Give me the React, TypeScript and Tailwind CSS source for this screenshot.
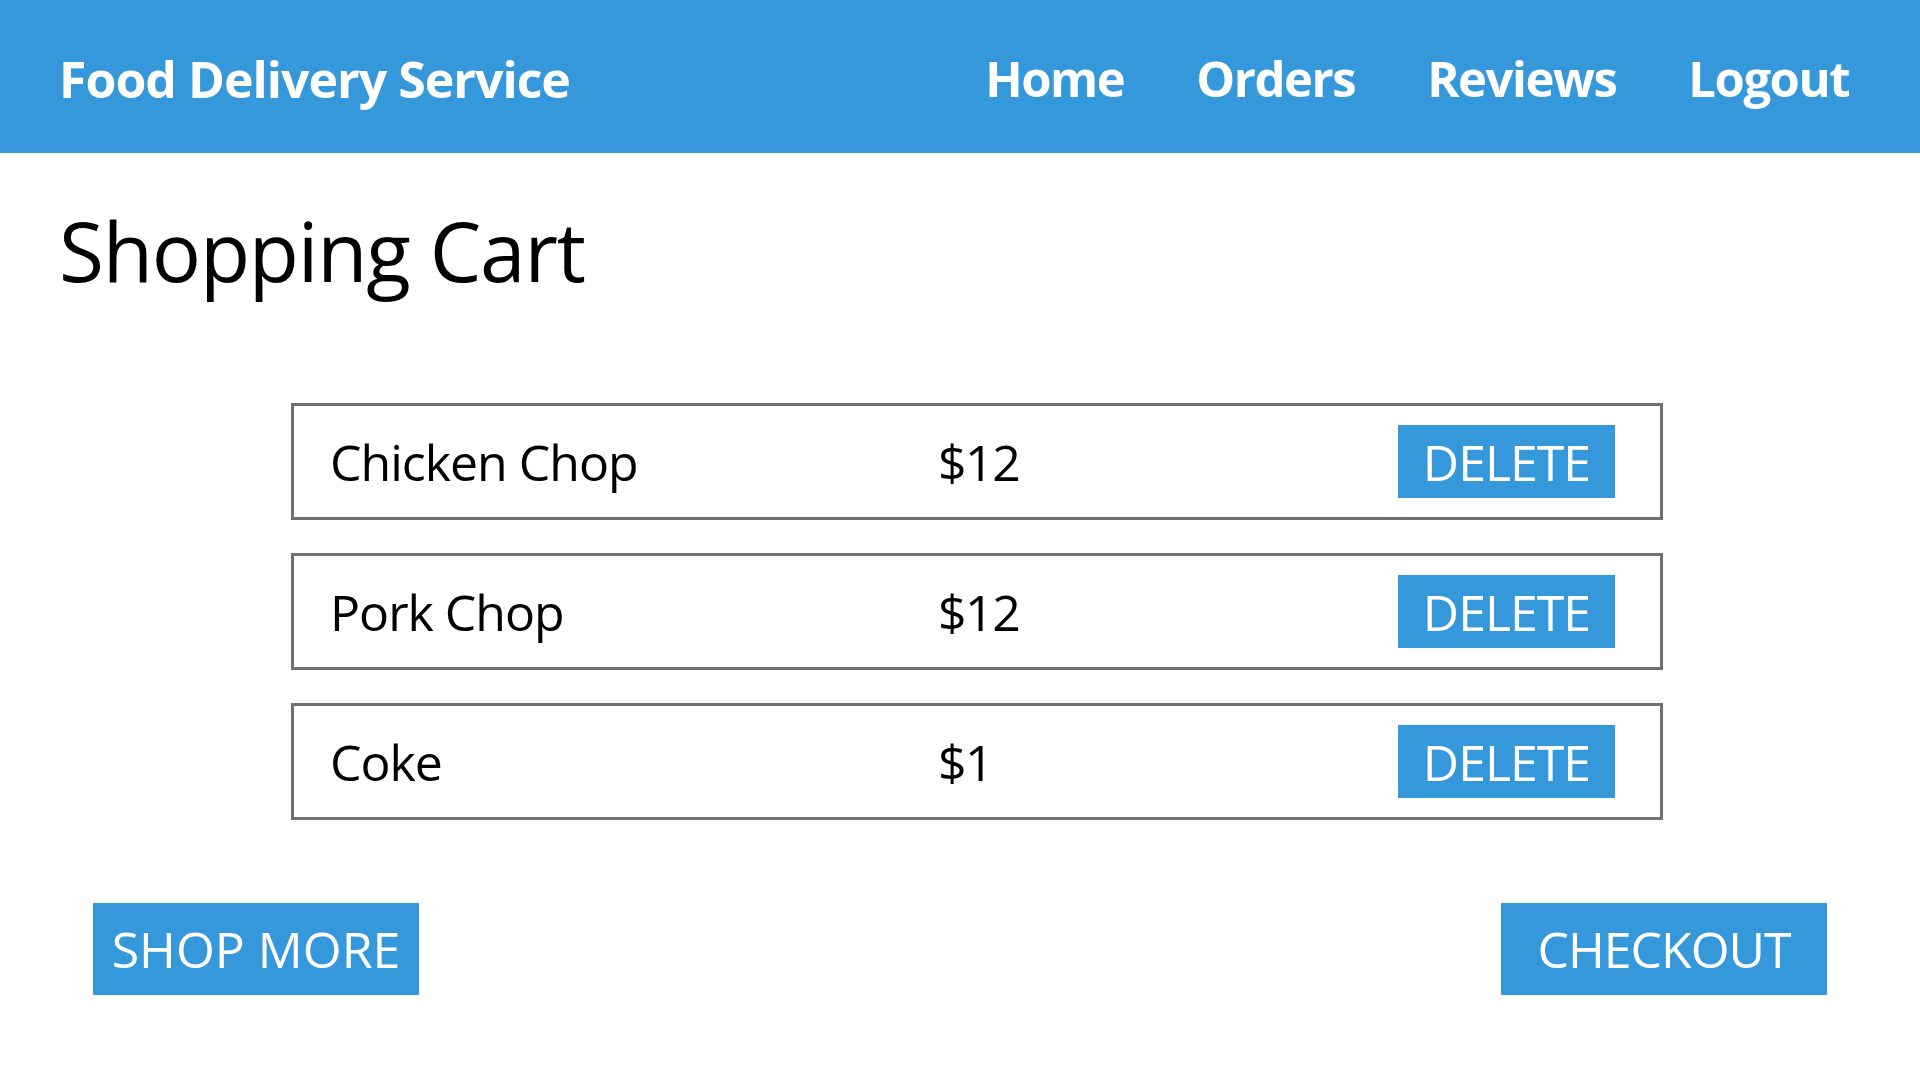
import React from 'react';

type CartItem = { id: number; name: string; price: number };

const items: CartItem[] = [
  { id: 1, name: 'Chicken Chop', price: 12 },
  { id: 2, name: 'Pork Chop', price: 12 },
  { id: 3, name: 'Coke', price: 1 },
];

const navLinks = ['Home', 'Orders', 'Reviews', 'Logout'];

const Header: React.FC = () => (
  <header className="h-[153px] bg-[#3498db] text-white flex items-center justify-between pt-[4px] pl-[59px] pr-[71px]">
    <h1 className="text-[50px] font-bold leading-none tracking-[-0.02em]">Food Delivery Service</h1>
    <nav className="flex items-center gap-[72px]">
      {navLinks.map((link) => (
        <a key={link} href="#" className="text-[49px] font-bold leading-none tracking-[-0.03em]">
          {link}
        </a>
      ))}
    </nav>
  </header>
);

const CartRow: React.FC<{ item: CartItem }> = ({ item }) => (
  <div className="h-[117px] border-[3px] border-[#707070] flex items-center pl-[36px] pr-[45px]">
    <span className="w-[608px] text-[50px] font-medium leading-none tracking-[-0.02em]">{item.name}</span>
    <span className="text-[50px] font-medium leading-none tracking-[-0.03em]">${item.price}</span>
    <button className="ml-auto w-[217px] h-[73px] bg-[#3498db] text-white text-[50px] font-medium leading-none tracking-[-0.02em]">
      DELETE
    </button>
  </div>
);

const App: React.FC = () => {
  return (
    <div className="min-h-screen bg-white text-black font-['Open_Sans','Noto_Sans',sans-serif]">
      <Header />
      <main>
        <h2 className="mt-[56px] ml-[59px] text-[82px] font-medium leading-none tracking-[-0.015em]">Shopping Cart</h2>

        <div className="mt-[112px] ml-[291px] w-[1372px] flex flex-col gap-[33px]">
          {items.map((item) => (
            <CartRow key={item.id} item={item} />
          ))}
        </div>

        <div className="mt-[83px] px-[93px] flex justify-between">
          <button className="w-[326px] h-[92px] bg-[#3498db] text-white text-[50px] font-medium leading-none">
            SHOP MORE
          </button>
          <button className="w-[326px] h-[92px] bg-[#3498db] text-white text-[50px] font-medium leading-none tracking-[-0.02em]">
            CHECKOUT
          </button>
        </div>
      </main>
    </div>
  );
};

export default App;
